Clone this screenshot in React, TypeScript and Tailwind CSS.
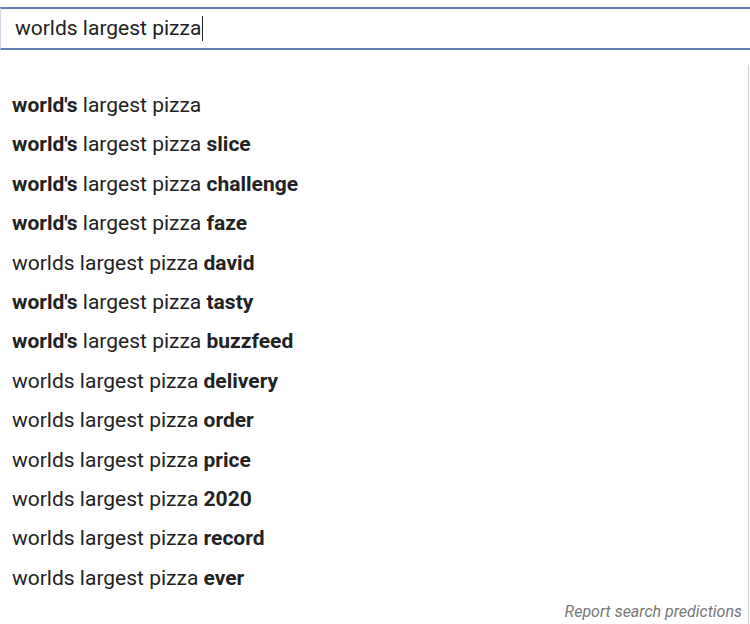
import React from "react";

const items: [string, string, string][] = [
  ["world's", " largest pizza", ""],
  ["world's", " largest pizza ", "slice"],
  ["world's", " largest pizza ", "challenge"],
  ["world's", " largest pizza ", "faze"],
  ["", "worlds largest pizza ", "david"],
  ["world's", " largest pizza ", "tasty"],
  ["world's", " largest pizza ", "buzzfeed"],
  ["", "worlds largest pizza ", "delivery"],
  ["", "worlds largest pizza ", "order"],
  ["", "worlds largest pizza ", "price"],
  ["", "worlds largest pizza ", "2020"],
  ["", "worlds largest pizza ", "record"],
  ["", "worlds largest pizza ", "ever"],
];

export default function App() {
  return (
    <div className="w-[750px] h-[624px] bg-white overflow-hidden" style={{ fontFamily: "Roboto, 'Liberation Sans', sans-serif" }}>
      <div className="pt-[7px]">
        <div className="h-[43px] border-y-2 border-[#5f80b6] border-l border-l-[#d0d8e6] flex items-center pl-[14px] text-[21px] text-[#222]">
          <span>worlds largest pizza</span>
          <span className="w-px h-[25px] bg-[#222] ml-px"></span>
        </div>
      </div>
      <div className="mt-[15px] mr-[1px] border-r border-[#cfcfcf] h-[560px] pt-[21px] pl-[12px] text-[21px] text-[#222]">
        {items.map((it, i) => (
          <div key={i} className="leading-[39.4px] h-[39.4px] whitespace-pre">
            {it[0] && <span className="font-bold">{it[0]}</span>}
            <span>{it[1]}</span>
            {it[2] && <span className="font-bold">{it[2]}</span>}
          </div>
        ))}
        <div className="text-right pr-[6px] mt-[2px] italic text-[16px] text-[#777]">Report search predictions</div>
      </div>
    </div>
  );
}
